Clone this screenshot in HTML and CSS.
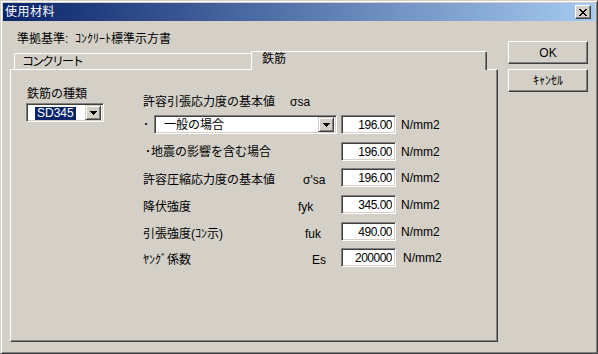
FILE: index.html
```html
<!DOCTYPE html>
<html>
<head>
    <title>使用材料</title>
    <meta charset="utf-8">
    <link rel="stylesheet" href="styles.css">
</head>
<body>
<div class="window">
    <div class="titlebar">
        <span class="title">使用材料</span>
        <span class="close">
            <svg width="8" height="7" viewBox="0 0 8 7" shape-rendering="crispEdges">
                <path d="M0 0h2v1H0z M6 0h2v1H6z M1 1h2v1H1z M5 1h2v1H5z M2 2h4v1H2z M3 3h2v1H3z M2 4h4v1H2z M1 5h2v1H1z M5 5h2v1H5z M0 6h2v1H0z M6 6h2v1H6z" fill="#000"/>
            </svg>
        </span>
    </div>
    <div class="client">
        <div class="main">
            <p class="standard">準拠基準:&nbsp; ｺﾝｸﾘｰﾄ標準示方書</p>
            <div class="tabs">
                <div class="tab tab-concrete">コンクリート</div>
                <div class="tab active">鉄筋</div>
            </div>
            <div class="panel">
                <div class="kind">
                    <label class="kind-label">鉄筋の種類</label>
                    <div class="combo combo-kind">
                        <span class="value"><span class="selected">SD345</span></span>
                        <span class="drop">
                            <svg width="7" height="4" viewBox="0 0 7 4" shape-rendering="crispEdges"><path d="M0 0h7v1H0z M1 1h5v1H1z M2 2h3v1H2z M3 3h1v1H3z" fill="#000"/></svg>
                        </span>
                    </div>
                </div>
                <div class="params">
                    <div class="head">
                        <span class="lbl">許容引張応力度の基本値</span>
                        <span class="sym sym-sa">σsa</span>
                    </div>
                    <div class="row">
                        <span class="dot">･</span>
                        <div class="combo combo-case">
                            <span class="value">一般の場合</span>
                            <span class="drop">
                                <svg width="7" height="4" viewBox="0 0 7 4" shape-rendering="crispEdges"><path d="M0 0h7v1H0z M1 1h5v1H1z M2 2h3v1H2z M3 3h1v1H3z" fill="#000"/></svg>
                            </span>
                        </div>
                        <input class="num" type="text" value="196.00">
                        <span class="unit">N/mm2</span>
                    </div>
                    <div class="row">
                        <span class="lbl lbl-sub">･地震の影響を含む場合</span>
                        <span class="sym"></span>
                        <input class="num" type="text" value="196.00">
                        <span class="unit">N/mm2</span>
                    </div>
                    <div class="row tight low">
                        <span class="lbl">許容圧縮応力度の基本値</span>
                        <span class="sym sym-csa">σ'sa</span>
                        <input class="num" type="text" value="196.00">
                        <span class="unit">N/mm2</span>
                    </div>
                    <div class="row low">
                        <span class="lbl">降伏強度</span>
                        <span class="sym sym-fyk">fyk</span>
                        <input class="num" type="text" value="345.00">
                        <span class="unit">N/mm2</span>
                    </div>
                    <div class="row low">
                        <span class="lbl">引張強度(ｺﾝ示)</span>
                        <span class="sym sym-fuk">fuk</span>
                        <input class="num" type="text" value="490.00">
                        <span class="unit">N/mm2</span>
                    </div>
                    <div class="row tight low">
                        <span class="lbl">ﾔﾝｸﾞ係数</span>
                        <span class="sym sym-es">Es</span>
                        <input class="num" type="text" value="200000">
                        <span class="unit unit-wide">N/mm2</span>
                    </div>
                </div>
            </div>
        </div>
        <div class="buttons">
            <button class="btn">OK</button>
            <button class="btn">ｷｬﾝｾﾙ</button>
        </div>
    </div>
</div>
</body>
</html>
```

FILE: styles.css
```css
* {
    box-sizing: border-box;
}

body {
    margin: 0;
    background-color: #d4d0c8;
    font-family: "Liberation Sans", "Noto Sans CJK JP", sans-serif;
    font-size: 12px;
    line-height: 14px;
    color: #000;
}

.window {
    width: 598px;
    height: 354px;
    padding: 2px;
    border: 1px solid;
    border-color: #d4d0c8 #404040 #404040 #d4d0c8;
    box-shadow: inset 1px 1px #fff, inset -1px -1px #808080;
}

/* title bar */

.titlebar {
    display: flex;
    align-items: center;
    justify-content: space-between;
    height: 18px;
    padding: 0 4px 0 2px;
    background: linear-gradient(to right, #0a246a, #a6caf0);
    color: #fff;
}

.title {
    letter-spacing: 0.5px;
}

.close {
    display: flex;
    align-items: center;
    justify-content: center;
    width: 16px;
    height: 14px;
    background-color: #d4d0c8;
    border: 1px solid;
    border-color: #fff #404040 #404040 #fff;
    box-shadow: inset -1px -1px #808080;
}

/* client area */

.client {
    display: flex;
    align-items: flex-start;
    padding-left: 7px;
}

.main {
    width: 488px;
}

.standard {
    margin: 11px 0 0 7px;
    height: 14px;
}

/* tabs */

.tabs {
    display: flex;
    align-items: flex-end;
    height: 18px;
    margin-top: 5px;
    padding-left: 4px;
}

.tab {
    height: 16px;
    padding: 1px 0 0 7px;
    border-top: 1px solid #fff;
    border-left: 1px solid #fff;
    border-top-left-radius: 2px;
}

.tab-concrete {
    width: 237px;
    letter-spacing: -2px;
}

.tab.active {
    position: relative;
    z-index: 1;
    width: 236px;
    height: 19px;
    margin-bottom: -1px;
    padding: 0 0 0 10px;
    background-color: #d4d0c8;
    border-right: 1px solid #404040;
    border-top-right-radius: 2px;
    box-shadow: inset -1px 0 #808080;
}

.panel {
    display: flex;
    height: 273px;
    padding: 17px 0 0 15px;
    border: 1px solid;
    border-color: #fff #404040 #404040 #fff;
    box-shadow: inset -1px -1px #808080;
}

/* left group */

.kind {
    width: 78px;
}

.kind-label {
    display: block;
    margin-left: 1px;
}

/* combo boxes */

.combo {
    display: flex;
    align-items: center;
    height: 19px;
    padding: 2px;
    background-color: #fff;
    border: 1px solid;
    border-color: #808080 #fff #fff #808080;
    box-shadow: inset 1px 1px #404040, inset -1px -1px #d4d0c8;
}

.combo-kind {
    margin-top: 2px;
}

.combo-case {
    width: 183px;
    margin-right: 4px;
}

.combo .value {
    flex: 1;
    padding-left: 7px;
}

.combo-kind .value {
    padding-left: 6px;
}

.selected {
    display: inline-block;
    padding: 0 2px;
    line-height: 13px;
    background-color: #0a246a;
    color: #fff;
}

.drop {
    display: flex;
    align-items: center;
    justify-content: center;
    width: 16px;
    height: 15px;
    background-color: #d4d0c8;
    border: 1px solid;
    border-color: #d4d0c8 #404040 #404040 #d4d0c8;
    box-shadow: inset 1px 1px #fff, inset -1px -1px #808080;
}

/* parameter rows */

.params {
    margin-left: 39px;
    padding-top: 8px;
}

.head {
    display: flex;
    height: 14px;
    margin-bottom: 6px;
}

.row {
    display: flex;
    align-items: center;
    height: 19px;
}

.row + .row {
    margin-top: 8px;
}

.row.tight {
    margin-top: 7px;
}

.row.low .lbl,
.row.low .sym {
    padding-top: 5px;
}

.lbl {
    width: 147px;
}

.lbl-sub {
    padding-left: 2px;
}

.dot {
    width: 11px;
}

.sym {
    width: 51px;
}

.sym-csa {
    padding-left: 13px;
}

.sym-fyk {
    padding-left: 8px;
}

.sym-fuk {
    padding-left: 15px;
}

.sym-es {
    padding-left: 22px;
}

.num {
    width: 55px;
    height: 19px;
    margin: 0;
    padding: 0 3px 0 0;
    font: inherit;
    letter-spacing: -0.5px;
    text-align: right;
    color: #000;
    background-color: #fff;
    border: 1px solid;
    border-color: #808080 #fff #fff #808080;
    box-shadow: inset 1px 1px #404040, inset -1px -1px #d4d0c8;
    outline: none;
}

.unit {
    margin-left: 5px;
}

.unit-wide {
    margin-left: 7px;
}

/* buttons */

.buttons {
    display: flex;
    flex-direction: column;
    gap: 5px;
    margin: 20px 0 0 10px;
}

.btn {
    width: 80px;
    height: 23px;
    padding: 0;
    font: inherit;
    color: #000;
    background-color: #d4d0c8;
    border: 1px solid;
    border-color: #fff #404040 #404040 #fff;
    box-shadow: inset -1px -1px #808080;
}
```
